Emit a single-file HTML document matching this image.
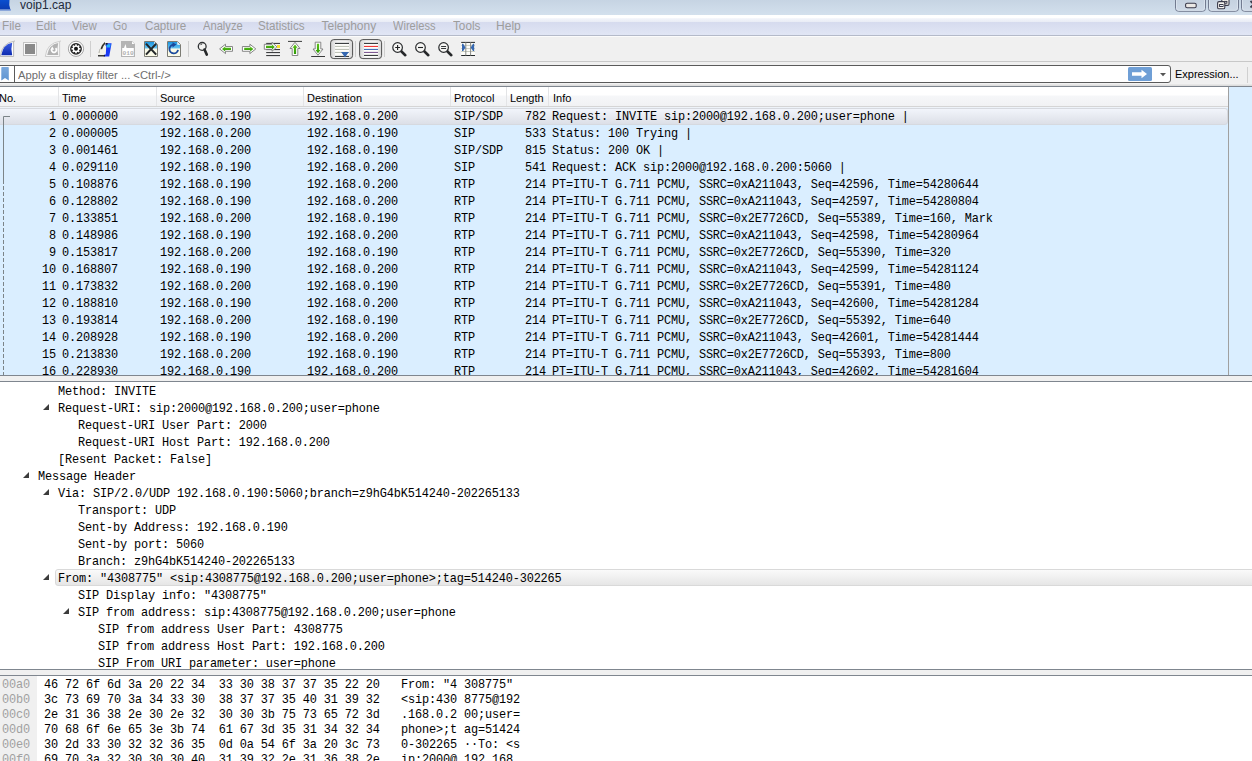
<!DOCTYPE html>
<html><head><meta charset="utf-8"><style>
html,body{margin:0;padding:0;}
body{width:1252px;height:761px;overflow:hidden;background:#f0f0f0;position:relative;font-family:"Liberation Sans",sans-serif;}
.a{position:absolute;}
.m{position:absolute;font-family:"Liberation Mono",monospace;font-size:11.9px;letter-spacing:-0.141px;white-space:pre;line-height:17px;color:#000;}
.s{position:absolute;font-family:"Liberation Sans",sans-serif;white-space:pre;}
</style></head><body>

<div class="a" style="left:0;top:0;width:1252px;height:15px;background:linear-gradient(#c6d4e3,#d3e0ed);"></div>
<div class="s" style="left:20px;top:-2.5px;font-size:12px;line-height:15px;color:#1e2a3a;">voip1.cap</div>
<svg class="a" style="left:0;top:0;" width="14" height="14" viewBox="0 0 14 14">
<defs><linearGradient id="tg" x1="0" y1="0" x2="0" y2="1"><stop offset="0" stop-color="#0a4fd0"/><stop offset="1" stop-color="#0a3ab0"/></linearGradient></defs>
<path d="M0 0 H9.5 Q8.5 5 10.5 10 H0 Z" fill="url(#tg)"/>
<path d="M0 9.2 H10.8 V10.8 H0 Z" fill="#7a9ad8"/>
</svg>
<svg class="a" style="left:1160px;top:0;" width="92" height="15" viewBox="1160 0 92 15">
<defs><linearGradient id="tb" x1="0" y1="0" x2="0" y2="1"><stop offset="0" stop-color="#c2cfde"/><stop offset="1" stop-color="#cfdae7"/></linearGradient></defs>
<rect x="1175.5" y="-4" width="30" height="15.3" rx="3" fill="url(#tb)" stroke="#727b90" stroke-width="1"/>
<rect x="1176.5" y="-3" width="28" height="13.3" rx="2.2" fill="none" stroke="#dde6f0" stroke-width="0.8"/>
<rect x="1185.6" y="3.2" width="10.6" height="4.6" rx="1.6" fill="#ebe9e6" stroke="#3a3a4a" stroke-width="1.1"/>
<rect x="1208.5" y="-4" width="30" height="15.3" rx="3" fill="url(#tb)" stroke="#727b90" stroke-width="1"/>
<rect x="1209.5" y="-3" width="28" height="13.3" rx="2.2" fill="none" stroke="#dde6f0" stroke-width="0.8"/>
<rect x="1221.8" y="-2.2" width="7.2" height="7.6" rx="1.4" fill="#f6f4ef" stroke="#3a3a4a" stroke-width="1.1"/>
<rect x="1224.3" y="1.4" width="2.6" height="1.8" fill="#f6f4ef" stroke="#3a3a4a" stroke-width="1"/>
<rect x="1217.6" y="1.6" width="7.2" height="7.2" rx="1.4" fill="#f6f4ef" stroke="#3a3a4a" stroke-width="1.1"/>
<rect x="1219.6" y="4.5" width="3.4" height="2" fill="#e8ecf2" stroke="#3a3a4a" stroke-width="1"/>
<rect x="1241.5" y="-4" width="30" height="15.3" rx="3" fill="url(#tb)" stroke="#727b90" stroke-width="1"/>
<rect x="1242.5" y="-3" width="28" height="13.3" rx="2.2" fill="none" stroke="#dde6f0" stroke-width="0.8"/>
<path d="M1250.5 1 L1253 3.5 M1250.5 7.5 L1253 5" stroke="#3a3a4a" stroke-width="1.8"/>
</svg>
<div class="a" style="left:0;top:15px;width:1252px;height:20px;background:linear-gradient(#ffffff 0px,#ffffff 3px,#f2f4fa 3.6px,#eaedf6 6.5px,#d6dbee 7.2px,#e1e6f5 20px);"></div>
<div class="a" style="left:0;top:35px;width:1252px;height:1px;background:#b4bac9;"></div>
<div class="a" style="left:0;top:36px;width:1252px;height:1px;background:#fbfbfb;"></div>
<div class="a" style="left:0;top:83px;width:1252px;height:3px;background:linear-gradient(#f6f6f6,#d8d8d8);"></div>
<div class="s" style="left:1.62px;top:19px;font-size:12px;line-height:15px;color:#9d9d9d;transform:scaleX(0.9778);transform-origin:0 0;">File</div>
<div class="s" style="left:35.94px;top:19px;font-size:12px;line-height:15px;color:#9d9d9d;transform:scaleX(0.9600);transform-origin:0 0;">Edit</div>
<div class="s" style="left:72.20px;top:19px;font-size:12px;line-height:15px;color:#9d9d9d;transform:scaleX(0.9577);transform-origin:0 0;">View</div>
<div class="s" style="left:113.20px;top:19px;font-size:12px;line-height:15px;color:#9d9d9d;transform:scaleX(0.8750);transform-origin:0 0;">Go</div>
<div class="s" style="left:144.50px;top:19px;font-size:12px;line-height:15px;color:#9d9d9d;transform:scaleX(0.9674);transform-origin:0 0;">Capture</div>
<div class="s" style="left:202.70px;top:19px;font-size:12px;line-height:15px;color:#9d9d9d;transform:scaleX(0.9302);transform-origin:0 0;">Analyze</div>
<div class="s" style="left:258.23px;top:19px;font-size:12px;line-height:15px;color:#9d9d9d;transform:scaleX(0.9702);transform-origin:0 0;">Statistics</div>
<div class="s" style="left:321.50px;top:19px;font-size:12px;line-height:15px;color:#9d9d9d;transform:scaleX(1.0000);transform-origin:0 0;">Telephony</div>
<div class="s" style="left:393.40px;top:19px;font-size:12px;line-height:15px;color:#9d9d9d;transform:scaleX(0.9239);transform-origin:0 0;">Wireless</div>
<div class="s" style="left:453.20px;top:19px;font-size:12px;line-height:15px;color:#9d9d9d;transform:scaleX(0.9786);transform-origin:0 0;">Tools</div>
<div class="s" style="left:496.40px;top:19px;font-size:12px;line-height:15px;color:#9d9d9d;transform:scaleX(1.0042);transform-origin:0 0;">Help</div>
<div class="a" style="left:0;top:61px;width:1252px;height:1px;background:#c8c8c8;"></div>
<svg class="a" style="left:0;top:36px;" width="500" height="26" viewBox="0 36 500 26">
<defs>
<linearGradient id="fin" x1="0" y1="0" x2="0" y2="1"><stop offset="0" stop-color="#3a5ce0"/><stop offset="1" stop-color="#0d2bb0"/></linearGradient>
<linearGradient id="docb" x1="0" y1="0" x2="0" y2="1"><stop offset="0" stop-color="#1a94e0"/><stop offset="1" stop-color="#6ac6f2"/></linearGradient>
<linearGradient id="grn" x1="0" y1="0" x2="0" y2="1"><stop offset="0" stop-color="#5ec21a"/><stop offset="1" stop-color="#2f9a08"/></linearGradient>
<linearGradient id="btn" x1="0" y1="0" x2="1" y2="0"><stop offset="0" stop-color="#d4d4d4"/><stop offset="0.3" stop-color="#f2f2f2"/><stop offset="0.7" stop-color="#f2f2f2"/><stop offset="1" stop-color="#d8d8d8"/></linearGradient>
</defs>
<!-- start capture fin -->
<path d="M0.3 56.5 Q1.5 43 14.6 41.1 L13.6 42 V56.5 Z" fill="#fff" stroke="#b4b4b4" stroke-width="0.9"/>
<path d="M1.3 55.2 Q3 44.2 12.2 42.7 Q10.6 49 12.2 55.2 Z" fill="url(#fin)"/>
<!-- stop -->
<rect x="23.5" y="42.5" width="13" height="13" fill="#fafafa" stroke="#c4c4c4"/>
<rect x="25" y="44" width="10" height="10" fill="#8a8a8a"/>
<!-- restart fin -->
<path d="M45.3 56.5 Q46.5 43 60.6 41.1 L59.6 42 V56.5 Z" fill="#f6f6f6" stroke="#c8c8c8" stroke-width="0.9"/>
<path d="M47.2 55 Q48.8 44.5 58.2 43 Q56.6 49 58.2 55 Z" fill="#b2b2b2"/>
<path d="M51.6 50 A2.4 2.4 0 1 0 55.6 48.2" fill="none" stroke="#fff" stroke-width="1.7"/>
<path d="M50.2 50.2 L52.2 46.6 L54.2 49.4 Z" fill="#fff"/>
<!-- options gear -->
<circle cx="76" cy="48.8" r="7.6" fill="#fff" stroke="#9a9a9a" stroke-width="0.9"/>
<circle cx="76" cy="48.8" r="5.9" fill="#262626"/>
<circle cx="76" cy="48.8" r="3.4" fill="#fff"/>
<g fill="#fff"><rect x="75.2" y="44.3" width="1.6" height="9"/><rect x="71.5" y="48" width="9" height="1.6"/>
<rect x="75.2" y="44.3" width="1.6" height="9" transform="rotate(45 76 48.8)"/><rect x="71.5" y="48" width="9" height="1.6" transform="rotate(45 76 48.8)"/></g>
<circle cx="76" cy="48.8" r="2.0" fill="#161616"/>
<rect x="90" y="41" width="1" height="16" fill="#cfcfcf"/>
<!-- open -->
<path d="M98 55.5 Q99 47.5 104.8 42 L106.2 44 L105.8 54 L103 55.5 Z" fill="#f2f1e8"/>
<path d="M100.5 48.5 Q101.8 44.5 104.8 42 L105.2 43.8 Q103 46 102 49.5 Z" fill="#34342c"/>
<path d="M99 53 Q99.3 50.5 100.2 48.8" fill="none" stroke="#a0a098" stroke-width="0.8"/>
<path d="M106 43.2 H111.6 L109.2 56.6 H103.6 L104.4 54.6 H105.8 L106.2 46.5 L105.4 45.2 Z" fill="#1a3af4"/>
<path d="M106.8 44.2 H110.6 L110.2 47.5 H106.6 Z" fill="#22b4f8"/>
<path d="M105.6 43 H107.6 V44.6 H105.6 Z" fill="#101828"/>
<path d="M98 55.2 H105 V56.4 H98 Z" fill="#0a0a0a"/>
<!-- save (disabled) -->
<path d="M121 41 H132 L135 44 V57 H121 Z" fill="#b4b4b4"/>
<path d="M132 41.5 V44 H134.5" fill="#fff"/>
<rect x="122.2" y="48" width="11.6" height="8" fill="#fff"/>
<path d="M124 48 L125.5 44 L126.5 48 Z" fill="#fff"/>
<text x="122.5" y="54.6" font-family="Liberation Mono" font-size="6.2" fill="#b0b0b0" font-weight="bold">010</text>
<!-- close -->
<path d="M144.5 41.5 H154.5 L157.5 44.5 V56.5 H144.5 Z" fill="#fbfbe8" stroke="#7c7c74"/>
<path d="M145 42 H154.3 L157 44.7 V48.5 H145 Z" fill="url(#docb)"/>
<path d="M154.3 41.8 V44.7 H157.2 Z" fill="#fff"/>
<path d="M146 43.6 L156.2 54.6 M156.2 43.6 L146 54.6" stroke="#24282a" stroke-width="2.1"/>
<!-- reload -->
<path d="M167.5 41.5 H177.5 L180.5 44.5 V56.5 H167.5 Z" fill="#fbfbe8" stroke="#7c7c74"/>
<path d="M168 42 H177.3 L180 44.7 V48.5 H168 Z" fill="url(#docb)"/>
<path d="M177.3 41.8 V44.7 H180.2 Z" fill="#fff"/>
<path d="M178 49.8 A4.3 4.3 0 1 1 173.5 44.8" fill="none" stroke="#1b4a9c" stroke-width="1.9"/>
<path d="M172.5 42.2 L176.5 44.6 L172.5 47.4 Z" fill="#1b4a9c"/>
<rect x="188" y="41" width="1" height="16" fill="#cfcfcf"/>
<!-- find -->
<circle cx="202.2" cy="46.4" r="3.9" fill="#f4f4f2" stroke="#303234" stroke-width="1.3"/>
<path d="M200.2 45.2 Q200.8 44 202.2 44" fill="none" stroke="#303234" stroke-width="0.9"/>
<path d="M204.5 49.5 L206.8 54.6" stroke="#26282a" stroke-width="2.6" stroke-linecap="round"/>
<!-- prev -->
<path d="M219.6 48.9 L225.5 44.2 V46.5 H232.5 V51.3 H225.5 V53.6 Z" fill="#fff" stroke="#7a7a7a" stroke-width="0.9" stroke-linejoin="round"/>
<path d="M222 48.9 L225.2 46.4 V47.8 H231 V50 H225.2 V51.4 Z" fill="url(#grn)"/>
<!-- next -->
<path d="M255.8 48.9 L249.9 44.2 V46.5 H242.4 V51.3 H249.9 V53.6 Z" fill="#fff" stroke="#7a7a7a" stroke-width="0.9" stroke-linejoin="round"/>
<path d="M253.4 48.9 L250.2 46.4 V47.8 H244.2 V50 H250.2 V51.4 Z" fill="url(#grn)"/>
<!-- goto -->
<g stroke="#2a2c2e" stroke-width="1"><path d="M266.2 43.4 H280 M266.2 49.6 H280 M266.2 52.6 H280 M266.2 55.6 H280"/></g>
<rect x="277" y="45" width="3" height="3" fill="#f8e030"/>
<path d="M276.9 46.9 L272 42.3 V44.3 H264.3 V49.3 H272 V51.3 Z" fill="#fff" stroke="#7a7a7a" stroke-width="0.9" stroke-linejoin="round"/>
<path d="M274.8 46.9 L272 44.4 V45.8 H266 V48 H272 V49.4 Z" fill="url(#grn)"/>
<!-- first -->
<path d="M288 41.4 H302" stroke="#3a3c3c" stroke-width="1"/>
<path d="M295 42.3 L300 48.5 H297.8 V55.5 H292.2 V48.5 H290 Z" fill="#fff" stroke="#7a7a7a" stroke-width="0.9" stroke-linejoin="round"/>
<path d="M295 44.4 L297.5 47.8 H296.1 V54 H293.9 V47.8 H292.5 Z" fill="url(#grn)"/>
<!-- last -->
<path d="M311.2 56.5 H325" stroke="#3a3c3c" stroke-width="1"/>
<path d="M318 55.2 L323 49 H320.8 V42.2 H315.2 V49 H313 Z" fill="#fff" stroke="#7a7a7a" stroke-width="0.9" stroke-linejoin="round"/>
<path d="M318 53.3 L320.5 50 H319.1 V43.8 H316.9 V50 H315.5 Z" fill="url(#grn)"/>
<!-- autoscroll toggled -->
<rect x="330.6" y="39.6" width="22" height="19" rx="3.2" fill="url(#btn)" stroke="#4e4e4e" stroke-width="1"/>
<rect x="335" y="43" width="14" height="14" fill="#fdfdfa"/>
<g stroke-width="1"><path d="M335 43.4 H349 M335 56.4 H349" stroke="#24282a"/><path d="M335 46.4 H349 M335 49.4 H349 M335 52.4 H349" stroke="#b8bcb0"/></g>
<path d="M341 52.1 H349 L346.6 55 L345.3 57.2 H344.7 L343.4 55 Z" fill="#3567b0"/>
<rect x="355" y="41" width="1" height="16" fill="#cfcfcf"/>
<!-- colorize toggled -->
<rect x="359.6" y="39.6" width="22" height="19" rx="3.2" fill="url(#btn)" stroke="#4e4e4e" stroke-width="1"/>
<rect x="364" y="43" width="14" height="14" fill="#fdfdfa"/>
<g stroke-width="1"><path d="M364 43.4 H378 M364 55.4 H378" stroke="#24282a"/><path d="M364 46.4 H378" stroke="#ee2020"/><path d="M364 49.4 H378" stroke="#3060b0"/><path d="M364 52.4 H378" stroke="#704888"/></g>
<rect x="384" y="41" width="1" height="16" fill="#cfcfcf"/>
<!-- zoom in -->
<path d="M401 51 L405.3 55.2" stroke="#26282a" stroke-width="2.6" stroke-linecap="round"/>
<circle cx="397.6" cy="47.5" r="4.8" fill="#f6f6f4" stroke="#2a2c2e" stroke-width="1.2"/>
<path d="M395.2 47.5 H400 M397.6 45.1 V49.9" stroke="#1e2022" stroke-width="1.1"/>
<!-- zoom out -->
<path d="M424 51 L428.3 55.2" stroke="#26282a" stroke-width="2.6" stroke-linecap="round"/>
<circle cx="420.5" cy="47.5" r="4.8" fill="#f6f6f4" stroke="#2a2c2e" stroke-width="1.2"/>
<path d="M418 47.5 H423" stroke="#1e2022" stroke-width="1.1"/>
<!-- normal -->
<path d="M447 51 L451.3 55.2" stroke="#26282a" stroke-width="2.6" stroke-linecap="round"/>
<circle cx="443.6" cy="47.5" r="4.8" fill="#f6f6f4" stroke="#2a2c2e" stroke-width="1.2"/>
<path d="M441.1 46.5 H446.1 M441.1 48.5 H446.1" stroke="#1e2022" stroke-width="0.9"/>
<!-- resize columns -->
<rect x="461.2" y="42.4" width="13.8" height="13" fill="#fdfdfa"/>
<g stroke-width="1"><path d="M461.2 42.4 H475 M461.2 55.5 H475" stroke="#24282a"/><path d="M461.2 45.4 H475 M461.2 48.6 H475 M461.2 51.5 H475" stroke="#c8ccc0"/><path d="M465.8 42.4 V55.5 M470.6 42.4 V55.5" stroke="#8a8c88"/></g>
<path d="M462 43.8 H463.2 L465.5 47.4 L463.2 51 H462 Z" fill="#3567b0"/>
<path d="M474.2 43.8 H473 L470.7 47.4 L473 51 H474.2 Z" fill="#3567b0"/>
</svg>
<div class="a" style="left:-3px;top:65px;width:1174px;height:18px;box-sizing:border-box;border:1px solid #5a5a5a;border-radius:3px;background:#fff;"></div>
<div class="a" style="left:14px;top:65px;width:1px;height:18px;background:#5a5a5a;"></div>
<svg class="a" style="left:1px;top:67px;" width="9" height="15"><defs><linearGradient id="bm" x1="0" y1="0" x2="0" y2="1"><stop offset="0" stop-color="#7aa8dc"/><stop offset="1" stop-color="#5f95d2"/></linearGradient></defs><path d="M0.3 0.8 Q0.3 0 1 0 H7 Q7.8 0 7.8 0.8 V13.6 L4 11 L0.3 13.6 Z" fill="url(#bm)"/></svg>
<div class="s" style="left:18px;top:68px;font-size:11px;line-height:14px;color:#6d6d6d;transform:scaleX(1.02);transform-origin:0 0;">Apply a display filter ... &lt;Ctrl-/&gt;</div>
<svg class="a" style="left:1128px;top:67px;" width="44" height="15" viewBox="1128 67 44 15">
<rect x="1128" y="67" width="24" height="14" rx="1.5" fill="#6f9fd6"/>
<path d="M1132 72.3 H1141.5 V69.8 L1147 74 L1141.5 78.2 V75.7 H1132 Z" fill="#fff"/>
<path d="M1160 73 H1166 L1163 76.2 Z" fill="#555"/>
</svg>
<div class="s" style="left:1175px;top:67px;font-size:11px;line-height:14px;color:#000;">Expression...</div>
<div class="a" style="left:1247px;top:67px;width:1px;height:16px;background:#d0d0d0;"></div>
<div class="a" style="left:0;top:86px;width:1252px;height:1px;background:#7f868f;"></div>
<div class="a" style="left:0;top:87px;width:1252px;height:288px;background:#daeeff;"></div>
<div class="a" style="left:0;top:87px;width:1228px;height:19px;background:linear-gradient(#ffffff 0px,#ffffff 8px,#f6f7f9 9px,#f1f2f4 19px);"></div>
<div class="a" style="left:0;top:106px;width:1228px;height:1px;background:#d5d5d5;"></div>
<div class="a" style="left:0;top:107px;width:1228px;height:1px;background:#eef3f9;"></div>
<div class="a" style="left:58px;top:87px;width:1px;height:19px;background:#e3e4e6;"></div>
<div class="a" style="left:156px;top:87px;width:1px;height:19px;background:#e3e4e6;"></div>
<div class="a" style="left:303px;top:87px;width:1px;height:19px;background:#e3e4e6;"></div>
<div class="a" style="left:450px;top:87px;width:1px;height:19px;background:#e3e4e6;"></div>
<div class="a" style="left:506px;top:87px;width:1px;height:19px;background:#e3e4e6;"></div>
<div class="a" style="left:548px;top:87px;width:1px;height:19px;background:#e3e4e6;"></div>
<div class="a" style="left:1228px;top:87px;width:1px;height:288px;background:#a0a0a0;"></div>
<div class="s" style="left:-1px;top:91px;font-size:11px;line-height:14px;color:#000;">No.</div>
<div class="s" style="left:62px;top:91px;font-size:11px;line-height:14px;color:#000;">Time</div>
<div class="s" style="left:160px;top:91px;font-size:11px;line-height:14px;color:#000;">Source</div>
<div class="s" style="left:307px;top:91px;font-size:11px;line-height:14px;color:#000;">Destination</div>
<div class="s" style="left:454px;top:91px;font-size:11px;line-height:14px;color:#000;">Protocol</div>
<div class="s" style="left:510px;top:91px;font-size:11px;line-height:14px;color:#000;">Length</div>
<div class="s" style="left:553px;top:91px;font-size:11px;line-height:14px;color:#000;">Info</div>
<div class="a" style="left:-3px;top:108px;width:1231px;height:17px;box-sizing:border-box;border:1px solid #d6d9df;border-radius:3px;background:linear-gradient(#f2f5fb,#dcdfe7);"></div>
<div class="m" style="left:49px;top:109px;">1</div>
<div class="m" style="left:62px;top:109px;">0.000000</div>
<div class="m" style="left:160px;top:109px;">192.168.0.190</div>
<div class="m" style="left:307px;top:109px;">192.168.0.200</div>
<div class="m" style="left:454px;top:109px;">SIP/SDP</div>
<div class="m" style="left:525px;top:109px;">782</div>
<div class="m" style="left:552px;top:109px;">Request: INVITE sip:2000@192.168.0.200;user=phone |</div>
<div class="m" style="left:49px;top:126px;">2</div>
<div class="m" style="left:62px;top:126px;">0.000005</div>
<div class="m" style="left:160px;top:126px;">192.168.0.200</div>
<div class="m" style="left:307px;top:126px;">192.168.0.190</div>
<div class="m" style="left:454px;top:126px;">SIP</div>
<div class="m" style="left:525px;top:126px;">533</div>
<div class="m" style="left:552px;top:126px;">Status: 100 Trying |</div>
<div class="m" style="left:49px;top:143px;">3</div>
<div class="m" style="left:62px;top:143px;">0.001461</div>
<div class="m" style="left:160px;top:143px;">192.168.0.200</div>
<div class="m" style="left:307px;top:143px;">192.168.0.190</div>
<div class="m" style="left:454px;top:143px;">SIP/SDP</div>
<div class="m" style="left:525px;top:143px;">815</div>
<div class="m" style="left:552px;top:143px;">Status: 200 OK |</div>
<div class="m" style="left:49px;top:160px;">4</div>
<div class="m" style="left:62px;top:160px;">0.029110</div>
<div class="m" style="left:160px;top:160px;">192.168.0.190</div>
<div class="m" style="left:307px;top:160px;">192.168.0.200</div>
<div class="m" style="left:454px;top:160px;">SIP</div>
<div class="m" style="left:525px;top:160px;">541</div>
<div class="m" style="left:552px;top:160px;">Request: ACK sip:2000@192.168.0.200:5060 |</div>
<div class="m" style="left:49px;top:177px;">5</div>
<div class="m" style="left:62px;top:177px;">0.108876</div>
<div class="m" style="left:160px;top:177px;">192.168.0.190</div>
<div class="m" style="left:307px;top:177px;">192.168.0.200</div>
<div class="m" style="left:454px;top:177px;">RTP</div>
<div class="m" style="left:525px;top:177px;">214</div>
<div class="m" style="left:552px;top:177px;">PT=ITU-T G.711 PCMU, SSRC=0xA211043, Seq=42596, Time=54280644</div>
<div class="m" style="left:49px;top:194px;">6</div>
<div class="m" style="left:62px;top:194px;">0.128802</div>
<div class="m" style="left:160px;top:194px;">192.168.0.190</div>
<div class="m" style="left:307px;top:194px;">192.168.0.200</div>
<div class="m" style="left:454px;top:194px;">RTP</div>
<div class="m" style="left:525px;top:194px;">214</div>
<div class="m" style="left:552px;top:194px;">PT=ITU-T G.711 PCMU, SSRC=0xA211043, Seq=42597, Time=54280804</div>
<div class="m" style="left:49px;top:211px;">7</div>
<div class="m" style="left:62px;top:211px;">0.133851</div>
<div class="m" style="left:160px;top:211px;">192.168.0.200</div>
<div class="m" style="left:307px;top:211px;">192.168.0.190</div>
<div class="m" style="left:454px;top:211px;">RTP</div>
<div class="m" style="left:525px;top:211px;">214</div>
<div class="m" style="left:552px;top:211px;">PT=ITU-T G.711 PCMU, SSRC=0x2E7726CD, Seq=55389, Time=160, Mark</div>
<div class="m" style="left:49px;top:228px;">8</div>
<div class="m" style="left:62px;top:228px;">0.148986</div>
<div class="m" style="left:160px;top:228px;">192.168.0.190</div>
<div class="m" style="left:307px;top:228px;">192.168.0.200</div>
<div class="m" style="left:454px;top:228px;">RTP</div>
<div class="m" style="left:525px;top:228px;">214</div>
<div class="m" style="left:552px;top:228px;">PT=ITU-T G.711 PCMU, SSRC=0xA211043, Seq=42598, Time=54280964</div>
<div class="m" style="left:49px;top:245px;">9</div>
<div class="m" style="left:62px;top:245px;">0.153817</div>
<div class="m" style="left:160px;top:245px;">192.168.0.200</div>
<div class="m" style="left:307px;top:245px;">192.168.0.190</div>
<div class="m" style="left:454px;top:245px;">RTP</div>
<div class="m" style="left:525px;top:245px;">214</div>
<div class="m" style="left:552px;top:245px;">PT=ITU-T G.711 PCMU, SSRC=0x2E7726CD, Seq=55390, Time=320</div>
<div class="m" style="left:42px;top:262px;">10</div>
<div class="m" style="left:62px;top:262px;">0.168807</div>
<div class="m" style="left:160px;top:262px;">192.168.0.190</div>
<div class="m" style="left:307px;top:262px;">192.168.0.200</div>
<div class="m" style="left:454px;top:262px;">RTP</div>
<div class="m" style="left:525px;top:262px;">214</div>
<div class="m" style="left:552px;top:262px;">PT=ITU-T G.711 PCMU, SSRC=0xA211043, Seq=42599, Time=54281124</div>
<div class="m" style="left:42px;top:279px;">11</div>
<div class="m" style="left:62px;top:279px;">0.173832</div>
<div class="m" style="left:160px;top:279px;">192.168.0.200</div>
<div class="m" style="left:307px;top:279px;">192.168.0.190</div>
<div class="m" style="left:454px;top:279px;">RTP</div>
<div class="m" style="left:525px;top:279px;">214</div>
<div class="m" style="left:552px;top:279px;">PT=ITU-T G.711 PCMU, SSRC=0x2E7726CD, Seq=55391, Time=480</div>
<div class="m" style="left:42px;top:296px;">12</div>
<div class="m" style="left:62px;top:296px;">0.188810</div>
<div class="m" style="left:160px;top:296px;">192.168.0.190</div>
<div class="m" style="left:307px;top:296px;">192.168.0.200</div>
<div class="m" style="left:454px;top:296px;">RTP</div>
<div class="m" style="left:525px;top:296px;">214</div>
<div class="m" style="left:552px;top:296px;">PT=ITU-T G.711 PCMU, SSRC=0xA211043, Seq=42600, Time=54281284</div>
<div class="m" style="left:42px;top:313px;">13</div>
<div class="m" style="left:62px;top:313px;">0.193814</div>
<div class="m" style="left:160px;top:313px;">192.168.0.200</div>
<div class="m" style="left:307px;top:313px;">192.168.0.190</div>
<div class="m" style="left:454px;top:313px;">RTP</div>
<div class="m" style="left:525px;top:313px;">214</div>
<div class="m" style="left:552px;top:313px;">PT=ITU-T G.711 PCMU, SSRC=0x2E7726CD, Seq=55392, Time=640</div>
<div class="m" style="left:42px;top:330px;">14</div>
<div class="m" style="left:62px;top:330px;">0.208928</div>
<div class="m" style="left:160px;top:330px;">192.168.0.190</div>
<div class="m" style="left:307px;top:330px;">192.168.0.200</div>
<div class="m" style="left:454px;top:330px;">RTP</div>
<div class="m" style="left:525px;top:330px;">214</div>
<div class="m" style="left:552px;top:330px;">PT=ITU-T G.711 PCMU, SSRC=0xA211043, Seq=42601, Time=54281444</div>
<div class="m" style="left:42px;top:347px;">15</div>
<div class="m" style="left:62px;top:347px;">0.213830</div>
<div class="m" style="left:160px;top:347px;">192.168.0.200</div>
<div class="m" style="left:307px;top:347px;">192.168.0.190</div>
<div class="m" style="left:454px;top:347px;">RTP</div>
<div class="m" style="left:525px;top:347px;">214</div>
<div class="m" style="left:552px;top:347px;">PT=ITU-T G.711 PCMU, SSRC=0x2E7726CD, Seq=55393, Time=800</div>
<div class="m" style="left:42px;top:364px;">16</div>
<div class="m" style="left:62px;top:364px;">0.228930</div>
<div class="m" style="left:160px;top:364px;">192.168.0.190</div>
<div class="m" style="left:307px;top:364px;">192.168.0.200</div>
<div class="m" style="left:454px;top:364px;">RTP</div>
<div class="m" style="left:525px;top:364px;">214</div>
<div class="m" style="left:552px;top:364px;">PT=ITU-T G.711 PCMU, SSRC=0xA211043, Seq=42602, Time=54281604</div>
<svg class="a" style="left:0;top:108px;" width="14" height="267"><path d="M3.5 8.5 H10 M3.5 8.5 V72" stroke="#7c8488" fill="none"/><path d="M3.5 72 V267" stroke="#7c8488" stroke-dasharray="4 2" fill="none"/></svg>
<div class="a" style="left:0;top:375px;width:1252px;height:1px;background:#7f868f;"></div>
<div class="a" style="left:0;top:376px;width:1252px;height:5px;background:#f0f0f0;"></div>
<div class="a" style="left:0;top:381px;width:1252px;height:1px;background:#7f868f;"></div>
<div class="a" style="left:0;top:382px;width:1252px;height:287px;background:#fff;overflow:hidden;">
<div class="m" style="left:58px;top:2px;">Method: INVITE</div>
<svg class="a" style="left:43px;top:22px;" width="7" height="7"><path d="M6 0 L6 6 L0 6 Z" fill="#3c3c3c"/></svg>
<div class="m" style="left:58px;top:19px;">Request-URI: sip:2000@192.168.0.200;user=phone</div>
<div class="m" style="left:78px;top:36px;">Request-URI User Part: 2000</div>
<div class="m" style="left:78px;top:53px;">Request-URI Host Part: 192.168.0.200</div>
<div class="m" style="left:58px;top:70px;">[Resent Packet: False]</div>
<svg class="a" style="left:23px;top:90px;" width="7" height="7"><path d="M6 0 L6 6 L0 6 Z" fill="#3c3c3c"/></svg>
<div class="m" style="left:38px;top:87px;">Message Header</div>
<svg class="a" style="left:43px;top:107px;" width="7" height="7"><path d="M6 0 L6 6 L0 6 Z" fill="#3c3c3c"/></svg>
<div class="m" style="left:58px;top:104px;">Via: SIP/2.0/UDP 192.168.0.190:5060;branch=z9hG4bK514240-202265133</div>
<div class="m" style="left:78px;top:121px;">Transport: UDP</div>
<div class="m" style="left:78px;top:138px;">Sent-by Address: 192.168.0.190</div>
<div class="m" style="left:78px;top:155px;">Sent-by port: 5060</div>
<div class="m" style="left:78px;top:172px;">Branch: z9hG4bK514240-202265133</div>
<div class="a" style="left:55px;top:187px;width:1200px;height:17px;box-sizing:border-box;border:1px solid #d9d9d9;border-radius:3px;background:linear-gradient(#fafafa,#e6e6e6);"></div>
<svg class="a" style="left:43px;top:192px;" width="7" height="7"><path d="M6 0 L6 6 L0 6 Z" fill="#3c3c3c"/></svg>
<div class="m" style="left:58px;top:189px;">From: "4308775" &lt;sip:4308775@192.168.0.200;user=phone&gt;;tag=514240-302265</div>
<div class="m" style="left:78px;top:206px;">SIP Display info: "4308775"</div>
<svg class="a" style="left:63px;top:226px;" width="7" height="7"><path d="M6 0 L6 6 L0 6 Z" fill="#3c3c3c"/></svg>
<div class="m" style="left:78px;top:223px;">SIP from address: sip:4308775@192.168.0.200;user=phone</div>
<div class="m" style="left:98px;top:240px;">SIP from address User Part: 4308775</div>
<div class="m" style="left:98px;top:257px;">SIP from address Host Part: 192.168.0.200</div>
<div class="m" style="left:98px;top:274px;">SIP From URI parameter: user=phone</div>
</div>
<div class="a" style="left:0;top:669px;width:1252px;height:1px;background:#7f868f;"></div>
<div class="a" style="left:0;top:670px;width:1252px;height:5px;background:#f0f0f0;"></div>
<div class="a" style="left:0;top:675px;width:1252px;height:1px;background:#7f868f;"></div>
<div class="a" style="left:0;top:676px;width:1252px;height:85px;background:#fff;"></div>
<div class="a" style="left:0;top:676px;width:37px;height:85px;background:#f0f0f0;"></div>
<div class="m" style="left:2px;top:678px;line-height:15px;color:#a0a0a0;">00a0</div>
<div class="m" style="left:44px;top:678px;line-height:15px;">46 72 6f 6d 3a 20 22 34  33 30 38 37 37 35 22 20</div>
<div class="m" style="left:401px;top:678px;line-height:15px;">From: "4 308775" </div>
<div class="m" style="left:2px;top:693px;line-height:15px;color:#a0a0a0;">00b0</div>
<div class="m" style="left:44px;top:693px;line-height:15px;">3c 73 69 70 3a 34 33 30  38 37 37 35 40 31 39 32</div>
<div class="m" style="left:401px;top:693px;line-height:15px;">&lt;sip:430 8775@192</div>
<div class="m" style="left:2px;top:708px;line-height:15px;color:#a0a0a0;">00c0</div>
<div class="m" style="left:44px;top:708px;line-height:15px;">2e 31 36 38 2e 30 2e 32  30 30 3b 75 73 65 72 3d</div>
<div class="m" style="left:401px;top:708px;line-height:15px;">.168.0.2 00;user=</div>
<div class="m" style="left:2px;top:723px;line-height:15px;color:#a0a0a0;">00d0</div>
<div class="m" style="left:44px;top:723px;line-height:15px;">70 68 6f 6e 65 3e 3b 74  61 67 3d 35 31 34 32 34</div>
<div class="m" style="left:401px;top:723px;line-height:15px;">phone&gt;;t ag=51424</div>
<div class="m" style="left:2px;top:738px;line-height:15px;color:#a0a0a0;">00e0</div>
<div class="m" style="left:44px;top:738px;line-height:15px;">30 2d 33 30 32 32 36 35  0d 0a 54 6f 3a 20 3c 73</div>
<div class="m" style="left:401px;top:738px;line-height:15px;">0-302265 ··To: &lt;s</div>
<div class="m" style="left:2px;top:753px;line-height:15px;color:#a0a0a0;">00f0</div>
<div class="m" style="left:44px;top:753px;line-height:15px;">69 70 3a 32 30 30 30 40  31 39 32 2e 31 36 38 2e</div>
<div class="m" style="left:401px;top:753px;line-height:15px;">ip:2000@ 192.168.</div>
</body></html>
